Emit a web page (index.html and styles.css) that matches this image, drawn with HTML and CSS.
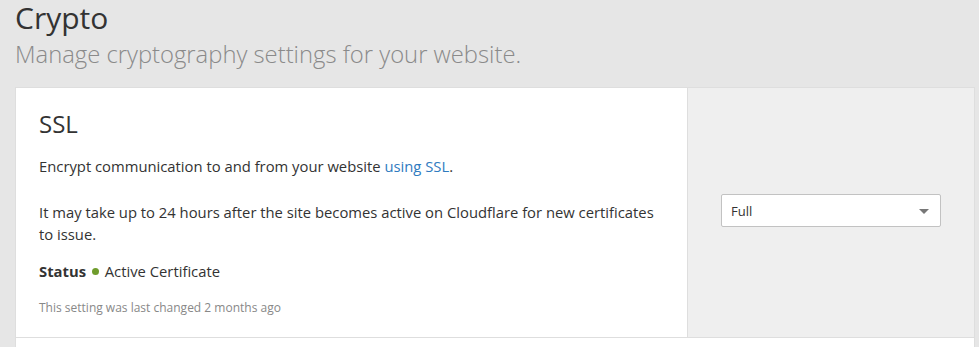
FILE: index.html
```html
<!DOCTYPE html>
<html lang="en">
<head>
<meta charset="utf-8">
<title>Crypto</title>
<link rel="stylesheet" href="styles.css">
</head>
<body>
<div class="page">
  <header class="page-header">
    <h1 class="page-title">Crypto</h1>
    <p class="page-subtitle">Manage cryptography settings for your website.</p>
  </header>
  <section class="card">
    <div class="card-row">
      <div class="card-main">
        <h2 class="card-title">SSL</h2>
        <p class="card-text first">Encrypt communication to and from your website <a class="link" href="#">using SSL</a>.</p>
        <p class="card-text second">It may take up to 24 hours after the site becomes active on Cloudflare for new certificates to issue.</p>
        <p class="card-text status"><strong>Status</strong> <span class="dot"></span> Active Certificate</p>
        <p class="card-note">This setting was last changed 2 months ago</p>
      </div>
      <div class="card-side">
        <div class="select">
          <span class="select-value">Full</span>
          <span class="select-arrow"></span>
        </div>
      </div>
    </div>
    <div class="card-row next-row">
      <div class="card-main"></div>
    </div>
  </section>
</div>
</body>
</html>
```

FILE: styles.css
```css
* { box-sizing: border-box; }
html, body { margin: 0; padding: 0; }
body {
  background: #e6e6e6;
  font-family: "Open Sans", "Noto Sans", sans-serif;
  color: #333;
  overflow: hidden;
}
.page {
  padding: 0 4px 0 15px;
}
.page-title {
  margin: 0;
  font-size: 30px;
  font-weight: 400;
  line-height: 36px;
  color: #333;
}
.page-subtitle {
  margin: 2px 0 0;
  font-size: 23.8px;
  font-weight: 300;
  line-height: 32px;
  color: #8a8a8a;
}
.card {
  margin-top: 17px;
  width: 960px;
  background: #fff;
  border: 1px solid #dedede;
}
.card-row {
  display: flex;
  border-bottom: 1px solid #dedede;
}
.card-main {
  flex: 0 0 671px;
  padding: 21px 20px 20px 23px;
}
.card-side {
  flex: 1;
  background: #efefef;
  border-left: 1px solid #dedede;
  display: flex;
  align-items: center;
  justify-content: center;
  padding-bottom: 4px;
}
.card-title {
  margin: 0;
  font-size: 24px;
  font-weight: 400;
  line-height: 29px;
  color: #333;
}
.card-text {
  margin: 0;
  font-size: 14.8px;
  line-height: 22px;
  color: #333;
}
.card-text.first { margin-top: 17px; }
.card-text.second { margin-top: 24px; }
.card-text.status { margin-top: 15px; }
.card-text strong { font-weight: 700; }
.link {
  color: #2f7bbf;
  text-decoration: none;
}
.dot {
  display: inline-block;
  width: 7px;
  height: 7px;
  border-radius: 50%;
  background: #6f9c2c;
  vertical-align: 2px;
  margin: 0 2px;
}
.card-note {
  margin: 17px 0 0;
  font-size: 12px;
  line-height: 18px;
  color: #888;
}
.select {
  width: 220px;
  height: 33px;
  background: #fff;
  border: 1px solid #c2c2c2;
  border-radius: 2px;
  display: flex;
  align-items: center;
  justify-content: space-between;
  padding: 0 11px 0 9px;
}
.select-value {
  font-size: 13px;
  color: #333;
}
.select-arrow {
  width: 0;
  height: 0;
  border-left: 5px solid transparent;
  border-right: 5px solid transparent;
  border-top: 5px solid #777;
  margin-top: 2px;
}
.next-row .card-main {
  height: 60px;
}
```
